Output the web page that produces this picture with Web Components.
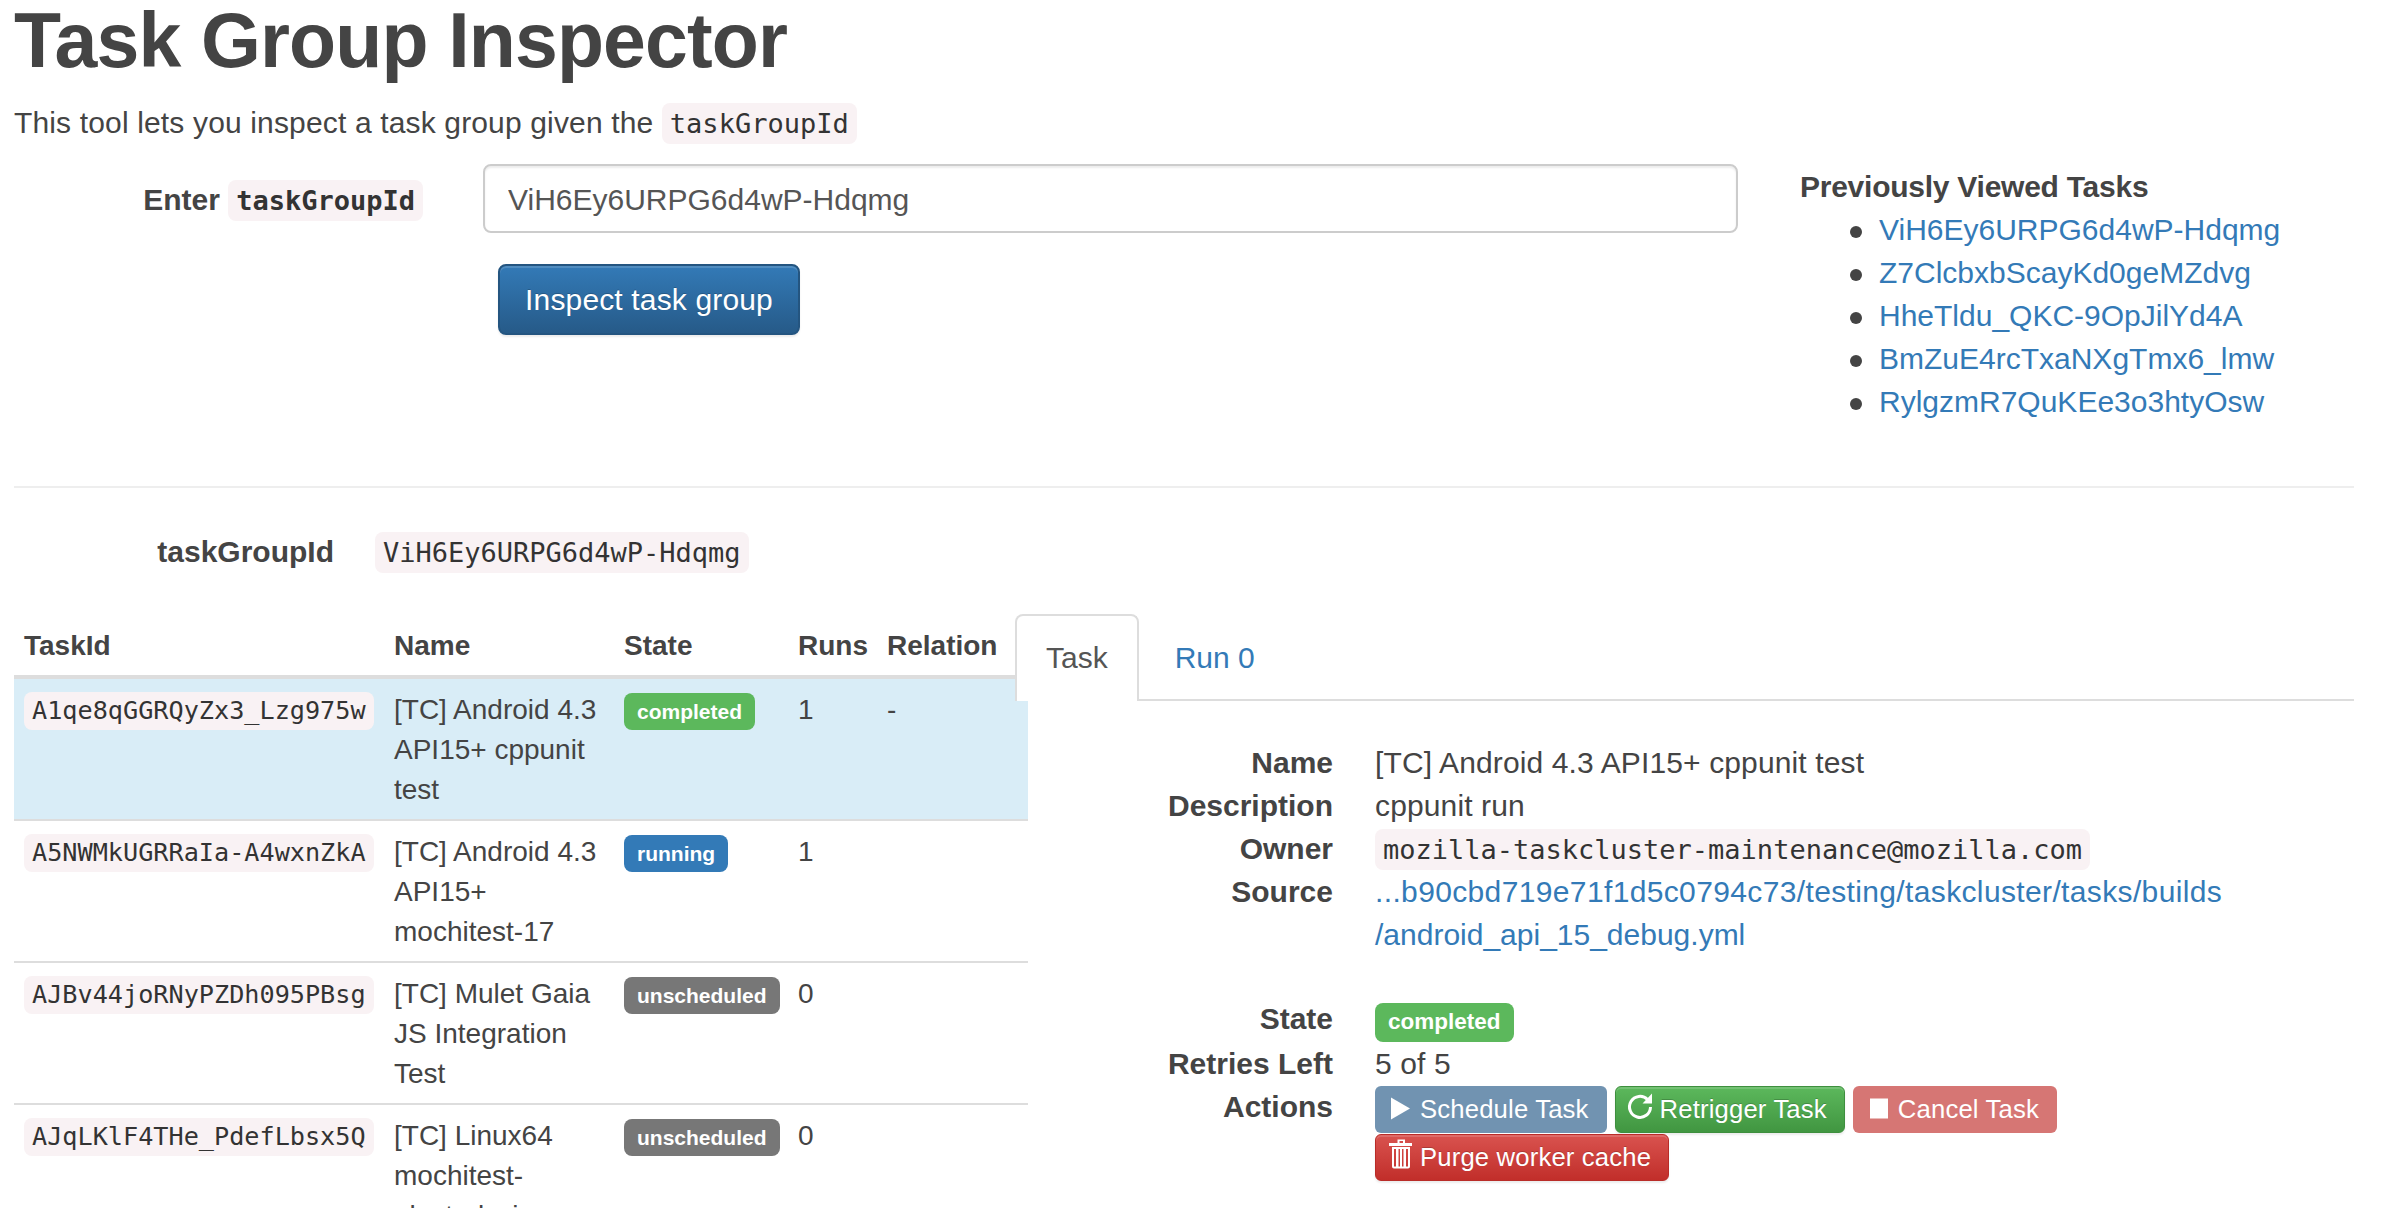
<!DOCTYPE html>
<html>
<head>
<meta charset="utf-8">
<title>Task Group Inspector</title>
<style>
html, body { margin: 0; height: 1208px; overflow: hidden; background: #fff; }
body { font-family: "Liberation Sans", Arial, sans-serif; color: #444; }
</style>
</head>
<body>
<tg-inspector></tg-inspector>

<script>
function define(name, html, setup) {
    const template = document.createElement('template');
    template.innerHTML = html;
    customElements.define(name, class extends HTMLElement {
        constructor() {
            super();
            this.attachShadow({ mode: 'open' }).append(template.content.cloneNode(true));
        }
        connectedCallback() {
            if (setup) setup(this);
        }
    });
}

define('tg-code', `
<style>
:host {
    display: inline-block;
    font-family: "DejaVu Sans Mono", "Liberation Mono", monospace;
    font-size: 0.9em;
    line-height: 1;
    letter-spacing: 0;
    color: #333;
    background: #f9f2f4;
    border-radius: 8px;
    padding: .25em 8px;
}
</style>
<slot></slot>`);

define('tg-label', `
<style>
:host {
    display: inline-block;
    font-weight: 700;
    font-size: 0.75em;
    line-height: 1;
    letter-spacing: 0;
    color: #fff;
    border-radius: 8px;
    padding: 8px 13px;
    background: #777;
}
:host([variant="completed"]) { background: #5cb85c; }
:host([variant="running"]) { background: #337ab7; }
</style>
<slot></slot>`);

// drawn on a 26px box; some spill out of it on purpose, like the glyphicons do
const ICONS = {
    play: '<path d="M-2 1.5 L17 12.5 L-2 23.5 Z" fill="#fff"/>',
    refresh: '<path d="M14.5 3.5 A10.5 10.5 0 1 0 17.5 11" fill="none" stroke="#fff" stroke-width="3"/><path d="M19 -2.5 V7.5 H9.5 Z" fill="#fff"/>',
    stop: '<rect x="-1" y="2.5" width="18" height="20" fill="#fff"/>',
    trash: '<path d="M-4 -1 H4.5 V-4.5 H12 V-1 H19 V2 H-4 Z M6.5 -1 H10 V-3 H6.5 Z" fill="#fff" fill-rule="evenodd"/><path d="M-1 3 H17 V22.5 A2 2 0 0 1 15 24.5 H1 A2 2 0 0 1 -1 22.5 Z M1 5 V22.5 H3 V5 Z M5.5 5 V22.5 H7 V5 Z M9 5 V22.5 H10.5 V5 Z M13 5 V22.5 H15 V5 Z" fill="#fff" fill-rule="evenodd"/>'
};

define('tg-btn', `
<style>
:host {
    display: inline-flex;
    align-items: center;
    height: 47px;
    box-sizing: border-box;
    padding: 0 18px;
    border-radius: 6px;
    font-size: 25.7px;
    letter-spacing: .15px;
    color: #fff;
    text-shadow: 0 -1px 0 rgba(0,0,0,.2);
    box-shadow: inset 0 2px 0 rgba(255,255,255,.15), 0 2px 2px rgba(0,0,0,.075);
    white-space: nowrap;
}
:host([variant="primary"]) { background: #265a88; }
:host([variant="success"]) { background: linear-gradient(#5cb85c, #419641); border: 1px solid #3e8f3e; padding: 0 17px; }
:host([variant="danger"]) { background: linear-gradient(#d9534f, #c12e2a); border: 1px solid #b92c28; padding: 0 17px; }
:host([variant="danger-off"]) { background: #c12e2a; }
:host([disabled]) { opacity: .65; box-shadow: none; text-shadow: none; }
svg { width: 26px; height: 26px; margin-right: 1px; flex: none; overflow: visible; }
</style>
<svg viewBox="0 0 26 26"></svg><slot></slot>`, el => {
    el.shadowRoot.querySelector('svg').innerHTML = ICONS[el.getAttribute('icon')];
});

define('tg-heading', `
<style>
:host { display: block; }
h1 { font-size: 77px; line-height: 85px; font-weight: 700; letter-spacing: -.85px; margin: -2px 0 18px; color: #444; }
p { margin: 0; font-size: 30px; line-height: 43px; letter-spacing: .15px; }
</style>
<h1>Task Group Inspector</h1>
<p>This tool lets you inspect a task group given the <tg-code>taskGroupId</tg-code></p>`);

define('tg-lookup', `
<style>
:host { display: grid; grid-template-columns: 409px 1255px; column-gap: 60px; align-content: start; }
label { font-size: 30px; font-weight: 700; line-height: 43px; text-align: right; padding-top: 14px; }
input {
    display: block;
    box-sizing: border-box;
    width: 100%;
    height: 69px;
    padding: 2px 23px 0;
    font: 30px "Liberation Sans", Arial, sans-serif;
    color: #555;
    background: #fff;
    border: 2px solid #ccc;
    border-radius: 8px;
    box-shadow: inset 0 2px 2px rgba(0,0,0,.075);
    outline: none;
}
button {
    display: block;
    grid-column: 2;
    justify-self: start;
    margin: 31px 0 0 15px;
    width: 302px;
    height: 71px;
    font: 30px "Liberation Sans", Arial, sans-serif;
    letter-spacing: .15px;
    color: #fff;
    background: linear-gradient(#337ab7, #265a88);
    border: 2px solid #245580;
    border-radius: 8px;
    text-shadow: 0 -1px 0 rgba(0,0,0,.2);
    box-shadow: inset 0 2px 0 rgba(255,255,255,.15), 0 2px 2px rgba(0,0,0,.075);
    padding: 0;
}
</style>
<label>Enter <tg-code>taskGroupId</tg-code></label>
<input value="ViH6Ey6URPG6d4wP-Hdqmg">
<button>Inspect task group</button>`);

define('tg-recent', `
<style>
:host { display: block; font-size: 30px; line-height: 43px; }
strong { display: block; margin-top: 1px; letter-spacing: -.25px; }
ul { margin: 0; padding: 0 0 0 50px; list-style: none; }
li { display: flex; align-items: center; }
li::before { content: ""; width: 12px; height: 12px; margin: 4px 17px 0 0; border-radius: 50%; background: #444; }
a { color: #337ab7; text-decoration: none; }
</style>
<strong>Previously Viewed Tasks</strong>
<ul>
    <li><a href="#">ViH6Ey6URPG6d4wP-Hdqmg</a></li>
    <li><a href="#">Z7ClcbxbScayKd0geMZdvg</a></li>
    <li><a href="#">HheTldu_QKC-9OpJilYd4A</a></li>
    <li><a href="#">BmZuE4rcTxaNXgTmx6_lmw</a></li>
    <li><a href="#">RylgzmR7QuKEe3o3htyOsw</a></li>
</ul>`);

define('tg-task-row', `
<style>
:host {
    display: grid;
    grid-template-columns: 370px 230px 174px 89px 151px;
    border-bottom: 2px solid #ddd;
    font-size: 28px;
    line-height: 40px;
}
:host([selected]) { background: #d9edf7; }
div { padding: 11px 10px 9px; height: 120px; }
div:first-child { padding-right: 0; white-space: nowrap; }
</style>
<div><slot name="id"></slot></div>
<div><slot name="name"></slot></div>
<div><slot name="state"></slot></div>
<div><slot name="runs"></slot></div>
<div><slot name="relation"></slot></div>`);

define('tg-task-table', `
<style>
:host { display: block; width: 1014px; margin-top: 12px; }
header {
    display: grid;
    grid-template-columns: 370px 230px 174px 89px 151px;
    font-size: 28px;
    font-weight: 700;
    line-height: 40px;
    border-bottom: 4px solid #ddd;
}
span { padding: 0 10px 9px; white-space: nowrap; }
</style>
<header><span>TaskId</span><span>Name</span><span>State</span><span>Runs</span><span>Relation</span></header>
<slot></slot>`);

define('tg-tabs', `
<style>
:host { display: flex; height: 85px; border-bottom: 2px solid #ddd; font-size: 30px; line-height: 43px; }
a { display: block; height: 87px; box-sizing: border-box; text-decoration: none; color: #337ab7; padding: 22px 32px 0; margin-left: 4px; }
a.active { color: #555; margin-left: 0; padding: 20px 29px 0; background: #fff; border: 2px solid #ddd; border-bottom: 0; border-radius: 8px 8px 0 0; }
</style>
<a class="active" href="#">Task</a>
<a href="#">Run 0</a>`);

define('tg-field', `
<style>
:host { display: grid; grid-template-columns: 318px 1fr; column-gap: 42px; font-size: 30px; line-height: 43px; }
b { text-align: right; white-space: nowrap; }
.value { min-width: 0; letter-spacing: .13px; }
</style>
<b></b><div class="value"><slot></slot></div>`, el => {
    el.shadowRoot.querySelector('b').textContent = el.getAttribute('label');
});

define('tg-actions', `
<style>
:host { display: flex; flex-wrap: wrap; gap: 1px 8px; width: 900px; padding-top: 1px; letter-spacing: 0; }
</style>
<slot></slot>`);

define('tg-task-pane', `
<style>
:host { display: block; position: relative; width: 1339px; }
.block { margin-top: 40px; }
.block + .block { margin-top: 41px; }
a { color: #337ab7; text-decoration: none; }
.long { letter-spacing: .36px; }
.tail { letter-spacing: 0; }
</style>
<tg-tabs></tg-tabs>
<div class="block">
    <tg-field label="Name">[TC] Android 4.3 API15+ cppunit test</tg-field>
    <tg-field label="Description">cppunit run</tg-field>
    <tg-field label="Owner"><tg-code>mozilla-taskcluster-maintenance@mozilla.com</tg-code></tg-field>
    <tg-field label="Source"><a href="#"><span class="long">...b90cbd719e71f1d5c0794c73/testing/taskcluster/tasks/builds</span><br><span class="tail">/android_api_15_debug.yml</span></a></tg-field>
</div>
<div class="block">
    <tg-field label="State"><tg-label variant="completed">completed</tg-label></tg-field>
    <tg-field label="Retries Left">5 of 5</tg-field>
    <tg-field label="Actions">
        <tg-actions>
            <tg-btn variant="primary" icon="play" disabled>Schedule Task</tg-btn>
            <tg-btn variant="success" icon="refresh">Retrigger Task</tg-btn>
            <tg-btn variant="danger-off" icon="stop" disabled>Cancel Task</tg-btn>
            <tg-btn variant="danger" icon="trash">Purge worker cache</tg-btn>
        </tg-actions>
    </tg-field>
</div>`);

define('tg-inspector', `
<style>
:host { display: block; width: 2340px; padding-left: 14px; }
.top { display: flex; margin-top: 20px; }
.top tg-recent { margin-left: 62px; }
hr { border: 0; border-top: 2px solid #eee; margin: 63px 0 42px; }
.group { display: grid; grid-template-columns: 320px auto; column-gap: 41px; justify-content: start; font-size: 30px; line-height: 43px; }
.group b { text-align: right; }
.split { display: flex; margin-top: 41px; align-items: flex-start; }
.left { width: 1001px; flex: none; }
</style>
<tg-heading></tg-heading>
<div class="top">
    <tg-lookup></tg-lookup>
    <tg-recent></tg-recent>
</div>
<hr>
<div class="group"><b>taskGroupId</b><div><tg-code>ViH6Ey6URPG6d4wP-Hdqmg</tg-code></div></div>
<div class="split">
    <div class="left">
        <tg-task-table>
            <tg-task-row selected>
                <tg-code slot="id">A1qe8qGGRQyZx3_Lzg975w</tg-code>
                <span slot="name">[TC] Android 4.3 API15+ cppunit test</span>
                <tg-label slot="state" variant="completed">completed</tg-label>
                <span slot="runs">1</span>
                <span slot="relation">-</span>
            </tg-task-row>
            <tg-task-row>
                <tg-code slot="id">A5NWMkUGRRaIa-A4wxnZkA</tg-code>
                <span slot="name">[TC] Android 4.3 API15+ mochitest-17</span>
                <tg-label slot="state" variant="running">running</tg-label>
                <span slot="runs">1</span>
            </tg-task-row>
            <tg-task-row>
                <tg-code slot="id">AJBv44joRNyPZDh095PBsg</tg-code>
                <span slot="name">[TC] Mulet Gaia JS Integration Test</span>
                <tg-label slot="state">unscheduled</tg-label>
                <span slot="runs">0</span>
            </tg-task-row>
            <tg-task-row>
                <tg-code slot="id">AJqLKlF4THe_PdefLbsx5Q</tg-code>
                <span slot="name">[TC] Linux64 mochitest- electrolysis</span>
                <tg-label slot="state">unscheduled</tg-label>
                <span slot="runs">0</span>
            </tg-task-row>
        </tg-task-table>
    </div>
    <tg-task-pane></tg-task-pane>
</div>`);
</script>
</body>
</html>
